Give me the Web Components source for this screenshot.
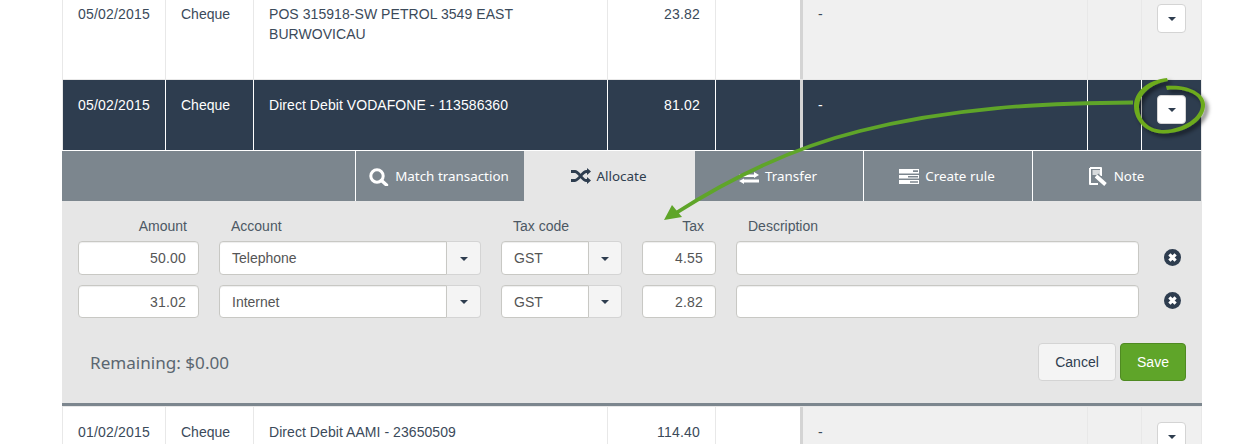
<!DOCTYPE html>
<html>
<head>
<meta charset="utf-8">
<title>Allocate</title>
<style>
  html, body { margin: 0; height: 444px; overflow: hidden; background: #fff; }
  body { position: relative; font: 14px "Liberation Sans", Arial, sans-serif; color: #3b4a5a; }
  #sheet { width: 1140px; margin: -11px 0 0 62px; }
  #arrow { position: absolute; left: 0; top: 0; pointer-events: none; }
</style>
</head>
<body>
<div id="sheet">
  <tx-row date="05/02/2015" type="Cheque" amount="23.82" height="91">POS 315918-SW PETROL 3549 EAST BURWOVICAU</tx-row>
  <tx-row date="05/02/2015" type="Cheque" amount="81.02" height="70" active>Direct Debit VODAFONE - 113586360</tx-row>
  <tab-bar>
    <tab-item icon="search" w="169">Match transaction</tab-item>
    <tab-item icon="shuffle" w="171" active>Allocate</tab-item>
    <tab-item icon="transfer" w="168" plain>Transfer</tab-item>
    <tab-item icon="rule" w="169">Create rule</tab-item>
    <tab-item icon="note" w="169">Note</tab-item>
  </tab-bar>
  <alloc-panel remaining="$0.00">
    <alloc-line amount="50.00" account="Telephone" code="GST" tax="4.55"></alloc-line>
    <alloc-line amount="31.02" account="Internet" code="GST" tax="2.82" short></alloc-line>
  </alloc-panel>
  <tx-row date="01/02/2015" type="Cheque" amount="114.40" height="38" cut>Direct Debit AAMI - 23650509</tx-row>
</div>

<svg id="arrow" width="1260" height="444" viewBox="0 0 1260 444">
  <defs>
    <filter id="soft" x="-30%" y="-30%" width="170%" height="170%">
      <feDropShadow dx="3" dy="3" stdDeviation="2.2" flood-color="#000" flood-opacity="0.55"/>
    </filter>
  </defs>
  <path d="M1133 102.500 C1040 103 950 108 860 131 C800 146 740 172 676 213" fill="none" stroke="#5fa529" stroke-width="3.800"/>
  <path d="M664 220 L672 205 L677 211 L682 217 Z" fill="#5fa529"/>
  <path d="M1167 78 C1147 80 1134 92 1134 106 C1134 122 1148 134 1164 133.500 C1186 133 1206 120 1205 104 C1204 92 1186 84 1166 86 L1167 90 C1184 88 1201 94 1201 105 C1201 117 1184 129 1164 130 C1150 130 1139 121 1139 107 C1139 95 1150 84 1168 81 Z" fill="#6dab1f" filter="url(#soft)"/>
</svg>

<script>
  // little svg set for the tab bar, all drawn on a 20x20 box
  const ICONS = {
    search: '<svg width="20" height="20" viewBox="0 0 20 20"><circle cx="8" cy="10" r="6.200" fill="none" stroke="currentColor" stroke-width="3"/><path d="M12.500 14.500 L17.500 19" stroke="currentColor" stroke-width="3.400" stroke-linecap="round"/></svg>',
    shuffle: '<svg width="20" height="20" viewBox="0 0 20 20"><path d="M0 5.500 H4 C8 5.500 11 14.500 15.500 14.500 H17 M0 14.500 H4 C8 14.500 11 5.500 15.500 5.500 H17" fill="none" stroke="currentColor" stroke-width="2.800"/><path d="M16 2 L20 5.500 L16 9 Z M16 11 L20 14.500 L16 18 Z" fill="currentColor"/></svg>',
    transfer: '<svg width="20" height="20" viewBox="0 0 20 20"><path d="M0 8.500 H15 V6 L20 9 L15 12 V11 H0 Z M20 13.500 H5 V12.500 L0 15 L5 18 V16.500 H20 Z" fill="currentColor"/></svg>',
    rule: '<svg width="20" height="20" viewBox="0 0 20 20"><path fill="currentColor" fill-rule="evenodd" d="M0 3 H20 V7.500 H0 Z M14 4.300 V6 H19 V4.300 Z M0 9 H20 V12.500 H0 Z M9 10 V11.500 H19 V10 Z M0 14 H20 V18 H0 Z M11 15.300 V16.800 H19 V15.300 Z"/></svg>',
    note: '<svg width="20" height="20" viewBox="0 0 20 20"><path d="M2 2 H13 V10 M2 2 V18 H10" fill="none" stroke="currentColor" stroke-width="2" stroke-linejoin="round"/><rect x="4.500" y="4" width="7.500" height="5" fill="currentColor" opacity=".7"/><path d="M8 10 L17 18" stroke="#7c868e" stroke-width="6.500"/><path d="M8 10 L17.500 18.500" stroke="currentColor" stroke-width="3.800"/></svg>'
  };

  class CaretButton extends HTMLElement {
    constructor() {
      super();
      this.attachShadow({ mode: 'open' });
      this.shadowRoot.innerHTML = `<style>
        :host { display: flex; align-items: center; justify-content: center; box-sizing: border-box; width: 29px; height: 29px; background: #fff; border: 1px solid #d4d4d4; border-radius: 4px; }
        i { width: 0; height: 0; border: 4px solid transparent; border-top: 4px solid #2e3d4f; border-bottom: 0; margin-top: 1px; }
      </style><i></i>`;
    }
  }
  customElements.define('caret-button', CaretButton);

  class TxRow extends HTMLElement {
    constructor() {
      super();
      this.attachShadow({ mode: 'open' });
      const h = this.getAttribute('height');
      this.shadowRoot.innerHTML = `<style>
        :host { display: grid; box-sizing: border-box; height: ${h}px; grid-template-columns: 103px 88px 354px 108px 87px 285px 54px 59px; grid-template-rows: minmax(0, 1fr); color: #3b4a5a; border-left: 1px solid #e8e8e8; border-right: 1px solid #e8e8e8; border-bottom: 1px solid #e8e8e8; line-height: 20px; }
        :host([active]) { background: #2e3d4f; color: #fff; border-left-color: #e8e8e8; border-bottom: 0; }
        :host([cut]) { border-top: 1px solid #e8e8e8; border-bottom: 0; }
        div { padding: 15px 15px 0; border-right: 1px solid #e8e8e8; overflow: hidden; }
        :host([active]) div { border-right-color: #fff; }
        .date { letter-spacing: .2px; }
        .desc { letter-spacing: .06px; }
        .num { text-align: right; letter-spacing: .2px; }
        .open { border-right: 3px solid #d4d4d4; }
        :host([active]) .open { border-right-color: #d4d4d4; }
        .grey { background: #f0f0f0; }
        :host([active]) .grey { background: transparent; }
        .last { border-right: 0; }
      </style>
      <div class="date">${this.getAttribute('date')}</div>
      <div class="type">${this.getAttribute('type')}</div>
      <div class="desc"><slot></slot></div>
      <div class="num">${this.getAttribute('amount')}</div>
      <div class="open"></div>
      <div class="grey">-</div>
      <div class="grey"></div>
      <div class="grey last"><caret-button></caret-button></div>`;
    }
  }
  customElements.define('tx-row', TxRow);

  class TabBar extends HTMLElement {
    constructor() {
      super();
      this.attachShadow({ mode: 'open' });
      this.shadowRoot.innerHTML = `<style>
        :host { display: flex; box-sizing: border-box; height: 51px; padding-left: 293px; background: #7c868e; border-top: 1px solid #fff; border-right: 1px solid #e8e8e8; }
      </style><slot></slot>`;
    }
  }
  customElements.define('tab-bar', TabBar);

  class TabItem extends HTMLElement {
    constructor() {
      super();
      this.attachShadow({ mode: 'open' });
      this.shadowRoot.innerHTML = `<style>
        :host { display: flex; flex: 0 0 ${this.getAttribute('w')}px; box-sizing: border-box; align-items: center; justify-content: center; gap: 6px; padding-right: 2px; color: #fff; border-left: 1px solid #fff; font: 13.4px "Noto Sans", "Open Sans", sans-serif; }
        :host([active]) { background: #e6e6e6; color: #2e3d4f; border-left: 0; }
        :host([plain]) { border-left: 0; }
        span { display: flex; }
      </style><span>${ICONS[this.getAttribute('icon')]}</span><slot></slot>`;
    }
  }
  customElements.define('tab-item', TabItem);

  class AllocLine extends HTMLElement {
    constructor() {
      super();
      this.attachShadow({ mode: 'open' });
      const h = this.hasAttribute('short') ? 33 : 34;
      this.shadowRoot.innerHTML = `<style>
        :host { display: grid; grid-template-columns: 121px 262px 121px 74px 403px 24px; column-gap: 20px; height: ${h}px; color: #555; }
        .field { display: flex; box-sizing: border-box; align-items: center; padding: 0 12px; background: #fff; border: 1px solid #c8c8c4; border-radius: 4px; box-shadow: inset 0 1px 1px rgba(0,0,0,.07); }
        .num { justify-content: flex-end; letter-spacing: .2px; }
        .combo { display: flex; }
        .combo .field { flex: 1; border-radius: 4px 0 0 4px; }
        .pick { display: flex; box-sizing: border-box; align-items: center; justify-content: center; background: #f4f4f4; border: 1px solid #d4d4d4; border-left: 0; border-radius: 0 4px 4px 0; }
        .pick i { width: 0; height: 0; border: 4px solid transparent; border-top: 4px solid #2e3d4f; border-bottom: 0; margin-top: 1px; }
        .wide .pick { width: 34px; }
        .thin .pick { width: 33px; }
        .del { display: flex; align-items: center; justify-content: center; margin: 0 0 2px 2px; }
      </style>
      <div class="field num">${this.getAttribute('amount')}</div>
      <div class="combo wide"><div class="field">${this.getAttribute('account')}</div><div class="pick"><i></i></div></div>
      <div class="combo thin"><div class="field">${this.getAttribute('code')}</div><div class="pick"><i></i></div></div>
      <div class="field num">${this.getAttribute('tax')}</div>
      <div class="field"></div>
      <div class="del"><svg width="17" height="17" viewBox="0 0 17 17"><circle cx="8.500" cy="8.500" r="8.500" fill="#2e3d4f"/><path d="M5.400 5.400 L11.600 11.600 M11.600 5.400 L5.400 11.600" stroke="#fff" stroke-width="3.200"/></svg></div>`;
    }
  }
  customElements.define('alloc-line', AllocLine);

  class AllocPanel extends HTMLElement {
    constructor() {
      super();
      this.attachShadow({ mode: 'open' });
      this.shadowRoot.innerHTML = `<style>
        :host { display: block; box-sizing: border-box; height: 205px; padding: 15px 16px 0; background: #e6e6e6; border-bottom: 3px solid #7c868e; color: #4c5864; }
        .heads { display: grid; grid-template-columns: 121px 262px 121px 74px 403px; column-gap: 20px; height: 20px; line-height: 20px; margin-bottom: 5px; }
        .heads div { padding: 0 12px; }
        .heads .r { text-align: right; }
        .lines { display: flex; flex-direction: column; gap: 10px; }
        .foot { display: flex; align-items: center; justify-content: space-between; height: 38px; margin-top: 25px; padding-left: 12px; }
        .left { font: 17.1px "Noto Sans", "Open Sans", sans-serif; color: #5b6670; }
        .btns { display: flex; gap: 4px; }
        button { box-sizing: border-box; height: 38px; font: 14px "Liberation Sans", Arial, sans-serif; border-radius: 4px; padding: 0; }
        .cancel { width: 78px; background: #f4f4f4; color: #2e3d4f; border: 1px solid #d4d4d4; }
        .save { width: 66px; background: #5fa529; color: #fff; border: 1px solid #4f8a22; }
      </style>
      <div class="heads"><div class="r">Amount</div><div>Account</div><div>Tax code</div><div class="r">Tax</div><div>Description</div></div>
      <div class="lines"><slot></slot></div>
      <div class="foot"><span class="left">Remaining: ${this.getAttribute('remaining')}</span><div class="btns"><button class="cancel">Cancel</button><button class="save">Save</button></div></div>`;
    }
  }
  customElements.define('alloc-panel', AllocPanel);
</script>
</body>
</html>
